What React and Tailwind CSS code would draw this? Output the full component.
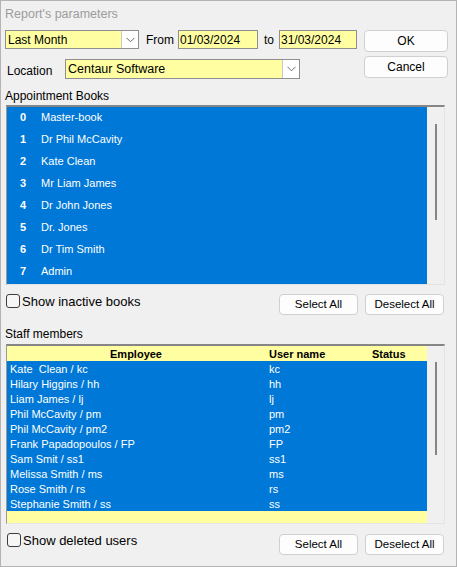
import React from "react";

const Chevron = () => (
  <svg width="9" height="6" viewBox="0 0 9 6">
    <path d="M0.5 0.8 L4.5 4.8 L8.5 0.8" fill="none" stroke="#6b6b6b" strokeWidth="1" />
  </svg>
);

const Combo = ({ w, h, text, size }) => (
  <div className={`flex ${w} ${h} border border-[#8f8f8f] bg-[#ffffa2]`}>
    <div className={`flex-1 pl-[2px] ${size} leading-none flex items-center`}>{text}</div>
    <div className="w-[17px] bg-white border-l border-[#c8c8c8] flex items-center justify-center">
      <Chevron />
    </div>
  </div>
);

const Btn = ({ w, h, children, size }) => (
  <div className={`${w} ${h} ${size} bg-[#fdfdfd] border border-[#d0d0d0] rounded-[4px] flex items-center justify-center text-black`}>
    {children}
  </div>
);

const Check = ({ label, ml }) => (
  <div className={`flex items-center ${ml}`}>
    <div className="w-[14px] h-[14px] border border-[#3c3c3c] rounded-[3px] bg-[#f6f6f6]"></div>
    <span className="ml-[2px] text-[13px] leading-none">{label}</span>
  </div>
);

const books = [
  ["0", "Master-book"],
  ["1", "Dr Phil McCavity"],
  ["2", "Kate Clean"],
  ["3", "Mr Liam James"],
  ["4", "Dr John Jones"],
  ["5", "Dr. Jones"],
  ["6", "Dr Tim Smith"],
  ["7", "Admin"],
];

const staff = [
  ["Kate  Clean / kc", "kc"],
  ["Hilary Higgins / hh", "hh"],
  ["Liam James / lj", "lj"],
  ["Phil McCavity / pm", "pm"],
  ["Phil McCavity / pm2", "pm2"],
  ["Frank Papadopoulos / FP", "FP"],
  ["Sam Smit / ss1", "ss1"],
  ["Melissa Smith / ms", "ms"],
  ["Rose Smith / rs", "rs"],
  ["Stephanie Smith / ss", "ss"],
];

export default function App() {
  return (
    <div className="w-[457px] h-[567px] bg-[#f0f0f0] border border-[#b4b4b4] font-['Liberation_Sans',Arial,sans-serif] text-black overflow-hidden">
      <div className="pl-[4px] pt-[5px] h-[29px] text-[12.5px] leading-[16px] text-[#9c9c9c]">Report's parameters</div>

      {/* Row 1 */}
      <div className="flex items-start pl-[4px] h-[26px]">
        <Combo w="w-[134px]" h="h-[19px]" text="Last Month" size="text-[12px]" />
        <div className="w-[39px] h-[19px] pl-[7px] text-[12px] flex items-center">From</div>
        <div className="w-[80px] h-[19px] border border-[#8f8f8f] bg-[#ffffa2] text-[12px] flex items-center pl-[1px]">01/03/2024</div>
        <div className="w-[21px] h-[19px] pl-[6px] text-[12px] flex items-center">to</div>
        <div className="w-[78px] h-[19px] border border-[#8f8f8f] bg-[#ffffa2] text-[12px] flex items-center pl-[1px]">31/03/2024</div>
        <div className="ml-[7px]">
          <Btn w="w-[84px]" h="h-[22px]" size="text-[12px]">OK</Btn>
        </div>
      </div>

      {/* Row 2 */}
      <div className="flex items-start pl-[6px] h-[29px]">
        <div className="w-[58px] h-[26px] pt-[3px] text-[12px] flex items-center">Location</div>
        <div className="mt-[3px]">
          <Combo w="w-[235px]" h="h-[20px]" text="Centaur Software" size="text-[12.5px]" />
        </div>
        <div className="ml-[64px]">
          <Btn w="w-[84px]" h="h-[22px]" size="text-[12px]">Cancel</Btn>
        </div>
      </div>

      <div className="pl-[4px] pt-[3px] h-[20px] text-[12px] leading-[16px]">Appointment Books</div>

      {/* Appointment books list */}
      <div className="ml-[5px] w-[439px] h-[180px] border-t-2 border-l border-t-[#868686] border-l-[#9a9a9a] border-r border-b border-r-[#e4e4e4] border-b-[#e4e4e4] flex">
        <div className="flex-1 bg-[#0078d7] text-white">
          {books.map(([n, name]) => (
            <div key={n} className="h-[22px] flex items-center text-[11px] pb-[1px]">
              <span className="w-[34px] pl-[13px] font-bold">{n}</span>
              <span>{name}</span>
            </div>
          ))}
        </div>
        <div className="w-[17px] bg-[#f0f0f0] pt-[17px] pl-[8px]">
          <div className="w-[2px] h-[96px] bg-[#858585]"></div>
        </div>
      </div>

      <div className="flex items-start pt-[9px] h-[30px]">
        <Check label="Show inactive books" ml="ml-[5px]" />
        <div className="ml-auto mr-[12px] flex gap-[7px]">
          <Btn w="w-[79px]" h="h-[21px]" size="text-[11.5px]">Select All</Btn>
          <Btn w="w-[79px]" h="h-[21px]" size="text-[11.5px]">Deselect All</Btn>
        </div>
      </div>

      <div className="pl-[4px] pt-[11px] h-[29px] text-[12px] leading-[16px]">Staff members</div>

      {/* Staff list */}
      <div className="ml-[5px] w-[439px] h-[180px] border-t-2 border-l border-t-[#868686] border-l-[#9a9a9a] border-r border-b border-r-[#e4e4e4] border-b-[#e4e4e4] flex">
        <div className="flex-1 flex flex-col text-[11px]">
          <div className="h-[15px] bg-[#ffffa2] flex items-center font-bold pt-[1px]">
            <div className="w-[258px] text-center">Employee</div>
            <div className="w-[98px] pl-[4px]">User name</div>
            <div className="pl-[9px]">Status</div>
          </div>
          {staff.map(([e, u]) => (
            <div key={e} className="h-[15px] bg-[#0078d7] text-white flex items-center pt-[1px]">
              <div className="w-[258px] pl-[3px] whitespace-pre">{e}</div>
              <div className="w-[98px] pl-[4px]">{u}</div>
            </div>
          ))}
          <div className="flex-1 bg-[#ffffa2]"></div>
        </div>
        <div className="w-[17px] bg-[#f0f0f0] pt-[16px] pl-[8px]">
          <div className="w-[2px] h-[93px] bg-[#858585]"></div>
        </div>
      </div>

      <div className="flex items-start pt-[10px]">
        <div className="-mt-[1px]">
          <Check label="Show deleted users" ml="ml-[6px]" />
        </div>
        <div className="ml-auto mr-[12px] flex gap-[7px]">
          <Btn w="w-[79px]" h="h-[21px]" size="text-[11.5px]">Select All</Btn>
          <Btn w="w-[79px]" h="h-[21px]" size="text-[11.5px]">Deselect All</Btn>
        </div>
      </div>
    </div>
  );
}
